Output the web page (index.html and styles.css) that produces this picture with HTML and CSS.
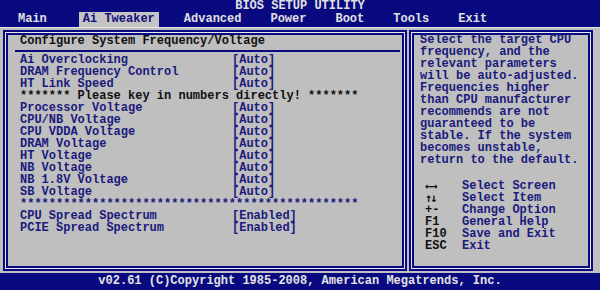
FILE: index.html
```html
<!DOCTYPE html>
<html lang="en">
<head>
  <meta charset="UTF-8" />
  <title>BIOS Setup Utility</title>
  <link rel="stylesheet" href="styles.css">
</head>
<body>
  <div class="screen">
    <header class="top">
      <div class="title">BIOS SETUP UTILITY</div>
      <nav class="tabs">
        <span class="tab tab-main">Main</span>
        <span class="tab active">Ai Tweaker</span>
        <span class="tab">Advanced</span>
        <span class="tab">Power</span>
        <span class="tab">Boot</span>
        <span class="tab">Tools</span>
        <span class="tab">Exit</span>
      </nav>
    </header>

    <main class="body">
      <section class="panel settings">
        <h1 class="heading">Configure System Frequency/Voltage</h1>
        <ul class="items">
          <li><span>Ai Overclocking</span><span>[Auto]</span></li>
          <li><span>DRAM Frequency Control</span><span>[Auto]</span></li>
          <li><span>HT Link Speed</span><span>[Auto]</span></li>
          <li class="note">******* Please key in numbers directly! *******</li>
          <li><span>Processor Voltage</span><span>[Auto]</span></li>
          <li><span>CPU/NB Voltage</span><span>[Auto]</span></li>
          <li><span>CPU VDDA Voltage</span><span>[Auto]</span></li>
          <li><span>DRAM Voltage</span><span>[Auto]</span></li>
          <li><span>HT Voltage</span><span>[Auto]</span></li>
          <li><span>NB Voltage</span><span>[Auto]</span></li>
          <li><span>NB 1.8V Voltage</span><span>[Auto]</span></li>
          <li><span>SB Voltage</span><span>[Auto]</span></li>
          <li class="stars">***********************************************</li>
          <li><span>CPU Spread Spectrum</span><span>[Enabled]</span></li>
          <li><span>PCIE Spread Spectrum</span><span>[Enabled]</span></li>
        </ul>
      </section>

      <aside class="panel help">
        <p class="help-text">
          Select the target CPU<br>
          frequency, and the<br>
          relevant parameters<br>
          will be auto-adjusted.<br>
          Frequencies higher<br>
          than CPU manufacturer<br>
          recommends are not<br>
          guaranteed to be<br>
          stable. If the system<br>
          becomes unstable,<br>
          return to the default.
        </p>
        <dl class="keys">
          <dt class="arrows">&larr;&rarr;</dt><dd>Select Screen</dd>
          <dt class="arrows">&uarr;&darr;</dt><dd>Select Item</dd>
          <dt>+-</dt><dd>Change Option</dd>
          <dt>F1</dt><dd>General Help</dd>
          <dt>F10</dt><dd>Save and Exit</dd>
          <dt>ESC</dt><dd>Exit</dd>
        </dl>
      </aside>
    </main>

    <footer class="footer">v02.61 (C)Copyright 1985-2008, American Megatrends, Inc.</footer>
  </div>
</body>
</html>
```

FILE: styles.css
```css
body {
  margin: 0;
  background-color: #bfbfbf;
  font-family: "Liberation Mono", "Courier New", monospace;
  font-size: 12px;
  font-weight: bold;
}

.screen {
  width: 600px;
  height: 290px;
  overflow: hidden;
  display: flex;
  flex-direction: column;
}

/* barra superior */
.top {
  background-color: #0a0a80;
  color: #e0e0e0;
  height: 27px;
}

.title {
  text-align: center;
  line-height: 12px;
  height: 12px;
}

.tabs {
  display: flex;
  gap: 21px;
  padding-left: 14px;
  line-height: 15px;
}

.tab {
  padding: 0 4px;
}

.tab-main {
  margin-right: 7px;
}

.tab.active {
  background-color: #c4c4c4;
  color: #10107a;
}

/* zona central */
.body {
  flex: 1;
  display: grid;
  grid-template-columns: 404px 184px;
  gap: 2px;
  padding: 2px 7px 2px 3px;
  border-top: 1px solid #e6e6e6;
}

.panel {
  border: 2px solid #0a0a80;
  box-shadow: inset 0 0 0 1px #e8e8f0, inset 0 0 0 3px #0a0a80;
  padding: 3px;
}

.heading {
  margin: 0 2px 0 7px;
  padding: 0 0 3px 5px;
  border-bottom: 2px solid #0a0a80;
  font-size: 12px;
  line-height: 12px;
  color: #111;
}

.items {
  list-style: none;
  margin: 2px 0 0;
  padding: 0 0 0 12px;
  line-height: 12px;
  color: #1a1a7c;
}

.items li {
  display: grid;
  grid-template-columns: 212px auto;
  white-space: pre;
}

.items li.note {
  display: block;
  color: #111;
}

.items li.stars {
  display: block;
}

.help {
  padding: 3px 3px 3px 9px;
  color: #1a1a7c;
}

.help-text {
  margin: -1px 0 0;
  line-height: 12px;
}

.keys {
  display: grid;
  grid-template-columns: 37px auto;
  margin: 14px 0 0 5px;
  line-height: 12px;
}

.keys dt {
  color: #111;
}

.keys dt.arrows {
  font-family: "DejaVu Sans Mono", monospace;
  font-size: 12px;
  letter-spacing: -2px;
}

.keys dd {
  margin: 0;
}

.footer {
  height: 17px;
  line-height: 17px;
  background-color: #0a0a80;
  color: #e4e4e4;
  text-align: center;
}
```
